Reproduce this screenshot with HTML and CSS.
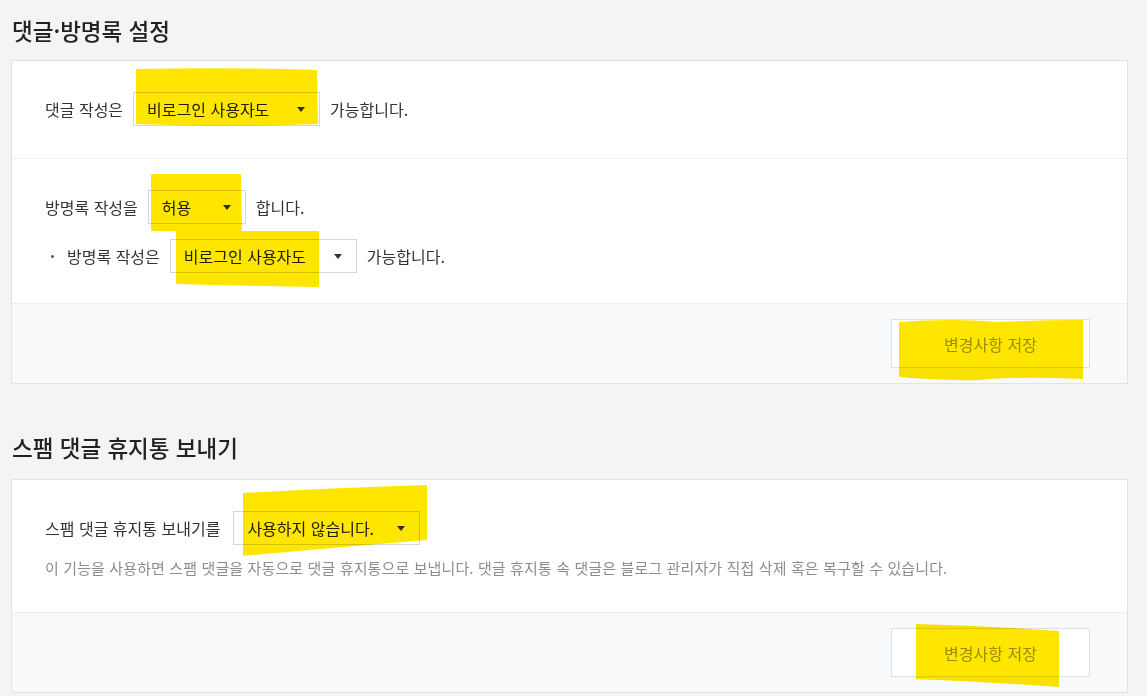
FILE: index.html
```html
<!DOCTYPE html>
<html lang="ko">
<head>
<meta charset="utf-8">
<link rel="stylesheet" href="styles.css">
</head>
<body>
<div class="page">
  <h2 class="title first">댓글·방명록 설정</h2>
  <section class="card">
    <div class="row row-a">
      <div class="line">
        <span class="label">댓글 작성은</span>
        <div class="select w187"><span>비로그인 사용자도</span><i class="arrow"></i></div>
        <span class="label">가능합니다.</span>
      </div>
    </div>
    <div class="row row-b">
      <div class="line">
        <span class="label">방명록 작성을</span>
        <div class="select w97"><span>허용</span><i class="arrow"></i></div>
        <span class="label">합니다.</span>
      </div>
      <div class="line sub">
        <span class="bullet"></span>
        <span class="label">방명록 작성은</span>
        <div class="select w187"><span>비로그인 사용자도</span><i class="arrow"></i></div>
        <span class="label">가능합니다.</span>
      </div>
    </div>
    <div class="foot"><button class="save">변경사항 저장</button></div>
  </section>

  <h2 class="title second">스팸 댓글 휴지통 보내기</h2>
  <section class="card">
    <div class="row row-c">
      <div class="line spam">
        <span class="label">스팸 댓글 휴지통 보내기를</span>
        <div class="select w187"><span>사용하지 않습니다.</span><i class="arrow"></i></div>
      </div>
      <p class="desc">이 기능을 사용하면 스팸 댓글을 자동으로 댓글 휴지통으로 보냅니다. 댓글 휴지통 속 댓글은 블로그 관리자가 직접 삭제 혹은 복구할 수 있습니다.</p>
    </div>
    <div class="foot"><button class="save">변경사항 저장</button></div>
  </section>
</div>
<svg class="marks" width="1147" height="696" viewBox="0 0 1147 696" aria-hidden="true">
  <path d="M136,69 Q220,67 317,70 L318,124 Q240,127 136,124 Z"/>
  <path d="M151,174 L241,174 L242,231 L151,231 Z"/>
  <path d="M176,231 L319,231 L319,287 Q250,286 176,284 Z"/>
  <path d="M899,322 Q950,318 1000,322 Q1040,320 1083,320 L1083,379 Q1020,376 980,380 Q940,381 899,377 Z"/>
  <path d="M243,493 Q330,488 427,485 L427,540 Q330,548 243,556 Z"/>
  <path d="M916,624 Q990,626 1059,631 L1059,687 Q990,682 916,679 Z"/>
</svg>
</body>
</html>
```

FILE: styles.css
```css
html, body {
  margin: 0;
  padding: 0;
  background: #f3f4f6;
}
body {
  font-family: "Noto Sans CJK KR", "Noto Sans", sans-serif;
  color: #333;
  position: relative;
  width: 1147px;
  height: 696px;
  overflow: hidden;
}
.page {
  padding-left: 11px;
  width: 1117px;
}
.title {
  margin: 0;
  font-size: 22.5px;
  font-weight: 500;
  line-height: 30px;
  color: #222;
  padding-left: 1px;
}
.title.first { padding-top: 15px; padding-bottom: 15px; }
.title.second { padding-top: 48px; padding-bottom: 17px; }
.card {
  background: #fff;
  border: 1px solid #e1e3e7;
}
.row {
  padding: 31px 33px 0;
}
.row-a {
  padding-bottom: 32px;
  border-bottom: 1px solid #eceef1;
}
.row-b {
  padding-bottom: 30px;
  display: flex;
  flex-direction: column;
  gap: 15px;
}
.row-c {
  padding-bottom: 33px;
}
.line {
  display: flex;
  align-items: center;
  gap: 10px;
  font-size: 16px;
}
.line.spam {
  gap: 13px;
}
.label {
  color: #333;
  white-space: nowrap;
}
.bullet {
  width: 3px;
  height: 3px;
  background: #555;
  border-radius: 50%;
  margin: 0 3px 0 6px;
}
.select {
  height: 34px;
  box-sizing: border-box;
  border: 1px solid #d4d7db;
  background: #fff;
  display: flex;
  align-items: center;
  justify-content: space-between;
  padding: 0 14px 0 13px;
  font-size: 16px;
  color: #222;
}
.w187 { width: 187px; }
.w97 { width: 98px; }
.arrow {
  width: 0;
  height: 0;
  border-left: 4px solid transparent;
  border-right: 4px solid transparent;
  border-top: 5px solid #333;
}
.desc {
  margin: 12px 0 0;
  font-size: 15px;
  line-height: 22px;
  letter-spacing: 0.12px;
  color: #8a8d92;
}
.foot {
  background: #f8f9fa;
  border-top: 1px solid #eceef1;
  padding: 15px 37px 15px 0;
  display: flex;
  justify-content: flex-end;
}
.save {
  width: 199px;
  height: 49px;
  background: #fff;
  border: 1px solid #dcdfe3;
  font-family: inherit;
  font-size: 16px;
  color: #9a9a9a;
}
.marks {
  position: absolute;
  left: 0;
  top: 0;
  pointer-events: none;
  mix-blend-mode: multiply;
}
.marks path {
  fill: #ffe600;
}
```
